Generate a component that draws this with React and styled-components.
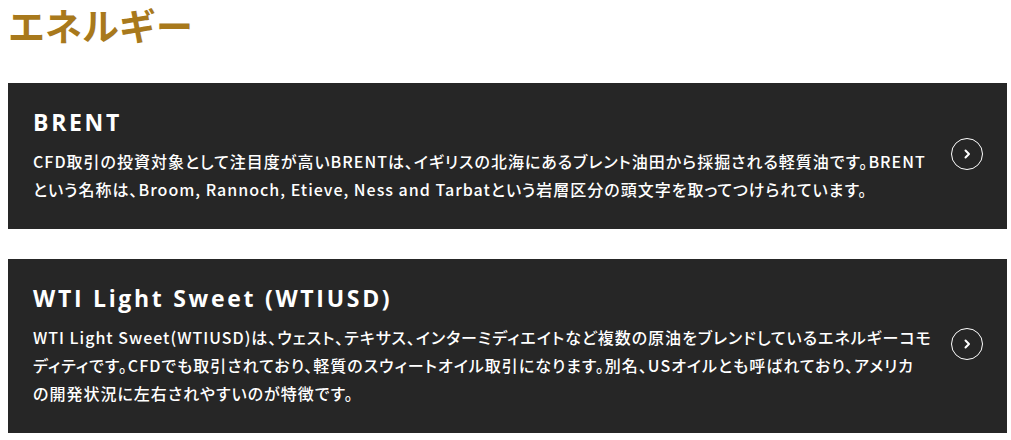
import React from "react";
import styled, { createGlobalStyle } from "styled-components";

const Global = createGlobalStyle`
  body {
    margin: 0;
    background: #fff;
    font-family: "Noto Sans CJK JP", "Noto Sans", sans-serif;
  }
`;

const Page = styled.div`
  padding: 0 4px 0 8px;
`;

const Heading = styled.h2`
  margin: 0;
  padding-top: 2px;
  font-size: 37px;
  line-height: 46px;
  font-weight: 700;
  color: #a8791c;
`;

const List = styled.div`
  display: flex;
  flex-direction: column;
  gap: 30px;
  margin-top: 35px;
`;

const Card = styled.a`
  display: flex;
  align-items: center;
  gap: 12px;
  background: #262626;
  color: #fff;
  text-decoration: none;
  padding: 22px 24px 26px 25px;
`;

const Body = styled.div`
  flex: 1;
`;

const Title = styled.h3`
  margin: 0 0 8px;
  font-family: "Open Sans", "Noto Sans CJK JP", sans-serif;
  font-size: 23px;
  line-height: 34px;
  font-weight: 700;
  letter-spacing: 2.7px;
`;

const Text = styled.p`
  margin: 0;
  font-size: 16px;
  line-height: 28px;
  font-weight: 500;
  letter-spacing: 1px;
  font-feature-settings: "palt";
`;

const Arrow = styled.span`
  flex: none;
  width: 30px;
  height: 30px;
  border: 1.5px solid #fff;
  border-radius: 50%;
  display: flex;
  align-items: center;
  justify-content: center;
`;

const items = [
  {
    title: "BRENT",
    lines: [
      "CFD取引の投資対象として注目度が高いBRENTは、イギリスの北海にあるブレント油田から採掘される軽質油です。BRENT",
      "という名称は、Broom, Rannoch, Etieve, Ness and Tarbatという岩層区分の頭文字を取ってつけられています。",
    ],
  },
  {
    title: "WTI Light Sweet (WTIUSD)",
    lines: [
      "WTI Light Sweet(WTIUSD)は、ウェスト、テキサス、インターミディエイトなど複数の原油をブレンドしているエネルギーコモ",
      "ディティです。CFDでも取引されており、軽質のスウィートオイル取引になります。別名、USオイルとも呼ばれており、アメリカ",
      "の開発状況に左右されやすいのが特徴です。",
    ],
  },
];

export default function App() {
  return (
    <Page>
      <Global />
      <Heading>エネルギー</Heading>
      <List>
        {items.map((item) => (
          <Card href="#" key={item.title}>
            <Body>
              <Title>{item.title}</Title>
              <Text>
                {item.lines.map((line, i) => (
                  <React.Fragment key={i}>
                    {i > 0 && <br />}
                    {line}
                  </React.Fragment>
                ))}
              </Text>
            </Body>
            <Arrow>
              <svg width="12" height="12" viewBox="0 0 12 12" fill="none">
                <path d="M4.5 2.5L8 6L4.5 9.5" stroke="#fff" strokeWidth="2" strokeLinecap="round" strokeLinejoin="round" />
              </svg>
            </Arrow>
          </Card>
        ))}
      </List>
    </Page>
  );
}
